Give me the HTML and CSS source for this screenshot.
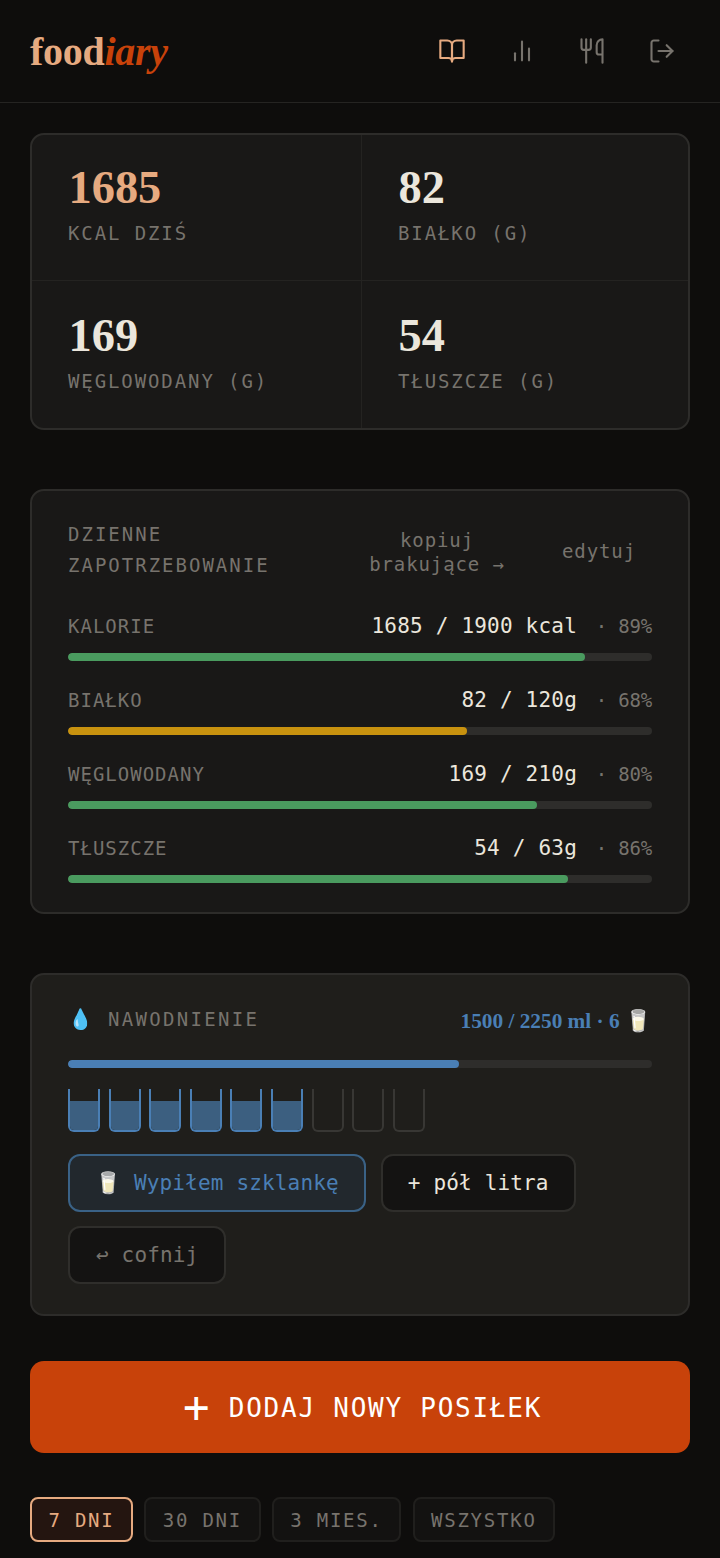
FILE: index.html
```html
<!DOCTYPE html>
<html lang="pl">
<head>
<meta charset="utf-8">
<title>foodiary</title>
<link rel="stylesheet" href="styles.css">
</head>
<body>
<header class="topbar">
  <div class="logo">food<em>iary</em></div>
  <nav class="nav">
    <a class="nav-item active"><svg viewBox="0 0 24 24"><path d="M2 3h6a4 4 0 0 1 4 4v14a3 3 0 0 0-3-3H2z"/><path d="M22 3h-6a4 4 0 0 0-4 4v14a3 3 0 0 1 3-3h7z"/></svg></a>
    <a class="nav-item"><svg viewBox="0 0 24 24"><path d="M18 20V10"/><path d="M12 20V4"/><path d="M6 20v-6"/></svg></a>
    <a class="nav-item"><svg viewBox="0 0 24 24"><path d="M3 2v7c0 1.1.9 2 2 2h4a2 2 0 0 0 2-2V2"/><path d="M7 2v20"/><path d="M21 15V2a5 5 0 0 0-5 5v6c0 1.1.9 2 2 2h3Zm0 0v7"/></svg></a>
    <a class="nav-item"><svg viewBox="0 0 24 24"><path d="M9 21H5a2 2 0 0 1-2-2V5a2 2 0 0 1 2-2h4"/><path d="m16 17 5-5-5-5"/><path d="M21 12H9"/></svg></a>
  </nav>
</header>
<main class="content">
  <section class="stats">
    <div class="stat"><div class="stat-num accent">1685</div><div class="stat-label">KCAL DZIŚ</div></div>
    <div class="stat"><div class="stat-num">82</div><div class="stat-label">BIAŁKO (G)</div></div>
    <div class="stat"><div class="stat-num">169</div><div class="stat-label">WĘGLOWODANY (G)</div></div>
    <div class="stat"><div class="stat-num">54</div><div class="stat-label">TŁUSZCZE (G)</div></div>
  </section>

  <section class="card needs">
    <div class="needs-head">
      <div class="card-title">DZIENNE ZAPOTRZEBOWANIE</div>
      <div class="link copy">kopiuj brakujące →</div>
      <div class="link edit">edytuj</div>
    </div>
    <div class="macro">
      <div class="macro-row"><span class="macro-name">KALORIE</span><span class="macro-val">1685 / 1900 kcal</span><span class="macro-pct">· 89%</span></div>
      <div class="track"><div class="fill green" style="width:88.5%"></div></div>
    </div>
    <div class="macro">
      <div class="macro-row"><span class="macro-name">BIAŁKO</span><span class="macro-val">82 / 120g</span><span class="macro-pct">· 68%</span></div>
      <div class="track"><div class="fill yellow" style="width:68.3%"></div></div>
    </div>
    <div class="macro">
      <div class="macro-row"><span class="macro-name">WĘGLOWODANY</span><span class="macro-val">169 / 210g</span><span class="macro-pct">· 80%</span></div>
      <div class="track"><div class="fill green" style="width:80.3%"></div></div>
    </div>
    <div class="macro">
      <div class="macro-row"><span class="macro-name">TŁUSZCZE</span><span class="macro-val">54 / 63g</span><span class="macro-pct">· 86%</span></div>
      <div class="track"><div class="fill green" style="width:85.7%"></div></div>
    </div>
  </section>

  <section class="card water">
    <div class="water-head">
      <div class="water-title"><span class="drop">💧</span>NAWODNIENIE</div>
      <div class="water-amount">1500 / 2250 ml · 6 🥛</div>
    </div>
    <div class="track water-track"><div class="fill blue" style="width:67%"></div></div>
    <div class="glasses">
      <div class="glass full"><div class="glass-fill"></div></div>
      <div class="glass full"><div class="glass-fill"></div></div>
      <div class="glass full"><div class="glass-fill"></div></div>
      <div class="glass full"><div class="glass-fill"></div></div>
      <div class="glass full"><div class="glass-fill"></div></div>
      <div class="glass full"><div class="glass-fill"></div></div>
      <div class="glass"></div>
      <div class="glass"></div>
      <div class="glass"></div>
    </div>
    <div class="water-btns">
      <button class="btn btn-blue">🥛 Wypiłem szklankę</button>
      <button class="btn">+ pół litra</button>
      <button class="btn btn-dim">↩ cofnij</button>
    </div>
  </section>

  <button class="add"><span class="add-plus">+</span> DODAJ NOWY POSIŁEK</button>

  <div class="filters">
    <button class="filter active">7 DNI</button>
    <button class="filter">30 DNI</button>
    <button class="filter">3 MIES.</button>
    <button class="filter">WSZYSTKO</button>
  </div>
</main>
</body>
</html>
```
FILE: styles.css
```css
* { box-sizing: border-box; }
html, body { margin: 0; padding: 0; }
body {
  width: 720px;
  height: 1558px;
  overflow: hidden;
  background: #0e0d0c;
  color: #ebe6dc;
  font-family: "DejaVu Sans Mono", monospace;
}
.topbar {
  height: 103px;
  border-bottom: 1px solid #252422;
  padding: 1px 30px 0;
  display: flex;
  align-items: center;
  justify-content: space-between;
}
.logo {
  font-family: "Liberation Serif", serif;
  font-weight: 700;
  font-size: 40px;
  letter-spacing: -0.3px;
  color: #e6aa80;
}
.logo em { color: #c8420a; font-style: italic; }
.nav { display: flex; gap: 16px; margin: 0 1px 1px 0; }
.nav-item {
  width: 54px;
  height: 44px;
  display: flex;
  align-items: center;
  justify-content: center;
  color: #77736d;
}
.nav-item.active { color: #e6aa80; }
.nav-item svg {
  width: 28px;
  height: 28px;
  fill: none;
  stroke: currentColor;
  stroke-width: 1.8;
  stroke-linecap: round;
  stroke-linejoin: round;
}
.content { padding: 30px 30px 0; }
.stats {
  display: grid;
  grid-template-columns: 330px 1fr;
  grid-template-rows: 146px 1fr;
  background: #191817;
  border: 2px solid #2d2c2a;
  border-radius: 14px;
  overflow: hidden;
  height: 297px;
}
.stat { padding: 26px 36px 0; border-right: 1px solid #242321; border-bottom: 1px solid #242321; }
.stat:nth-child(2n) { border-right: 0; }
.stat:nth-child(n+3) { border-bottom: 0; padding-top: 28px; }
.stat-num {
  font-family: "Liberation Serif", serif;
  font-weight: 700;
  font-size: 46.4px;
  line-height: 54px;
  margin-left: 0.5px;
  color: #ebe6dc;
}
.stat-num.accent { color: #e6aa80; }
.stat-label {
  margin-top: 6px;
  font-size: 19px;
  line-height: 24px;
  letter-spacing: 1.9px;
  color: #77736d;
}
.card {
  background: #191817;
  border: 2px solid #2d2c2a;
  border-radius: 14px;
  padding: 28px 36px;
}
.needs { margin-top: 59px; height: 425px; }
.needs-head { display: flex; align-items: center; min-height: 64px; margin-bottom: 25px; }
.card-title {
  width: 250px;
  margin-bottom: 2px;
  font-size: 19px;
  line-height: 31px;
  letter-spacing: 2px;
  color: #77736d;
}
.link {
  font-size: 19px;
  line-height: 24px;
  letter-spacing: 0.9px;
  color: #77736d;
  text-align: center;
}
.copy { width: 160px; margin-left: 39px; margin-top: 2px; }
.edit { margin-left: 45px; }
.macro { height: 74px; }
.macro-row { display: flex; align-items: baseline; height: 36px; line-height: 36px; }
.macro-name { flex: 1; font-size: 19px; letter-spacing: 1px; color: #77736d; }
.macro-val { font-size: 21px; letter-spacing: 0.2px; color: #ebe6dc; }
.macro-pct { width: 75px; text-align: right; font-size: 19px; letter-spacing: -0.2px; color: #77736d; }
.track { height: 8px; border-radius: 4px; background: #2e2d2b; overflow: hidden; margin-top: 9px; }
.fill { height: 100%; border-radius: 4px; }
.green { background: #4a9b5f; }
.yellow { background: #c8920f; }
.blue { background: #4a7fb5; }
.water { margin-top: 59px; height: 343px; background: #1f1e1b; padding-top: 26px; }
.water-head { display: flex; align-items: center; justify-content: space-between; height: 40px; }
.water-title { font-size: 19px; letter-spacing: 2.3px; color: #77736d; margin-bottom: 4px; }
.drop { margin-right: 15px; letter-spacing: 0; font-size: 20px; }
.water-amount { font-family: "Liberation Serif", serif; font-weight: 700; font-size: 21.3px; color: #4a7fb5; }
.water-track { margin-top: 19px; background: #2e2d2b; }
.glasses { display: flex; gap: 8.6px; margin-top: 21px; }
.glass {
  width: 32px;
  height: 43px;
  border: 2px solid #383734;
  border-top: 0;
  border-radius: 0 0 6px 6px;
  display: flex;
  align-items: flex-end;
  overflow: hidden;
}
.glass.full { border-color: #4a7fb5; }
.glass-fill { width: 100%; height: 70%; background: #3c5f80; }
.water-btns { display: flex; flex-wrap: wrap; gap: 14px 15px; margin-top: 22px; }
.btn {
  height: 58px;
  padding: 0 25px;
  background: #141312;
  border: 2px solid #2f2e2b;
  border-radius: 12px;
  font-family: "DejaVu Sans Mono", monospace;
  font-size: 21px;
  letter-spacing: 0.16px;
  color: #ebe6dc;
}
.btn-blue { background: #22282d; border-color: #3a6286; color: #4a7fb5; }
.btn-dim { padding: 0 26px; color: #77736d; }
.add {
  display: block;
  width: 100%;
  height: 92px;
  margin-top: 45px;
  padding-left: 11px;
  background: #c8420a;
  border: 0;
  border-radius: 14px;
  color: #fff;
  font-family: "DejaVu Sans Mono", monospace;
  font-size: 26px;
  letter-spacing: 1.75px;
}
.add-plus { font-size: 44px; line-height: 1; vertical-align: -5px; letter-spacing: 0; margin-right: 2px; }
.filters { display: flex; gap: 11.3px; margin-top: 44px; }
.filter {
  height: 45px;
  padding: 0 16.5px;
  background: #131211;
  border: 2px solid #201f1d;
  border-radius: 8px;
  font-family: "DejaVu Sans Mono", monospace;
  font-size: 19px;
  letter-spacing: 1.76px;
  color: #77736d;
}
.filter.active { background: #241510; border-color: #e6aa80; color: #e6aa80; }
```
